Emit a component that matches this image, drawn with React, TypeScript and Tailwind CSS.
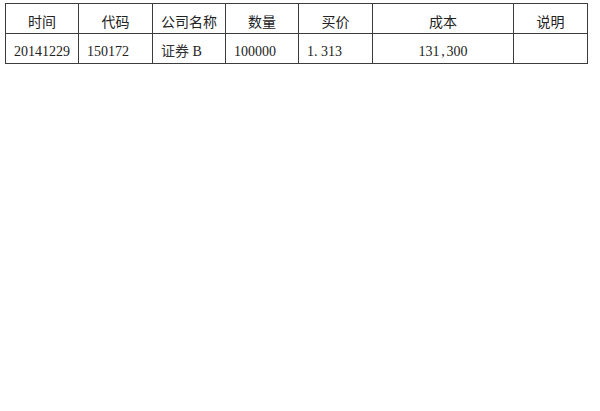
const columns = [
	{ label: '时间', width: 'w-[73px]' },
	{ label: '代码', width: 'w-[74px]' },
	{ label: '公司名称', width: 'w-[73px]' },
	{ label: '数量', width: 'w-[73px]' },
	{ label: '买价', width: 'w-[74px]' },
	{ label: '成本', width: 'w-[141px]' },
	{ label: '说明', width: 'w-[74px]' },
];

// SimSun-style half-width punctuation: give dots and commas a full digit cell
const Punct = ({ ch }: { ch: string }) => <span className="inline-block w-[7px]">{ch}</span>;

const App: React.FC = () => {
	const cell = 'border border-[#3c3c3c] h-[30px] p-0 align-bottom';

	return (
		<div className="w-[600px] h-[411px] bg-white pl-[5px] pt-[3px]">
			<table className="table-fixed border-collapse w-[583px] text-[#222]">
				<thead>
					<tr>
						{columns.map((c) => (
							<th
								key={c.label}
								className={`${cell} ${c.width} text-center text-[14px] font-normal leading-[20px] pb-[2px]`}
								style={{ fontFamily: '"Noto Sans CJK SC", sans-serif' }}
							>
								{c.label}
							</th>
						))}
					</tr>
				</thead>
				<tbody
					className="text-[14px] leading-[20px]"
					style={{ fontFamily: '"Liberation Serif", "Noto Sans CJK SC", serif' }}
				>
					<tr>
						<td className={`${cell} pl-[8px] pb-[1px]`}>20141229</td>
						<td className={`${cell} pl-[8px] pb-[1px]`}>150172</td>
						<td className={`${cell} pl-[8px] pb-[1px]`}>
							<span style={{ fontFamily: '"Noto Sans CJK SC", sans-serif' }} className="text-[#333]">
								证券
							</span>{' '}
							B
						</td>
						<td className={`${cell} pl-[8px] pb-[1px]`}>100000</td>
						<td className={`${cell} pl-[8px] pb-[1px]`}>
							1<Punct ch="." />313
						</td>
						<td className={`${cell} text-center pb-[1px]`}>
							131<Punct ch="," />300
						</td>
						<td className={`${cell} pb-[1px]`}></td>
					</tr>
				</tbody>
			</table>
		</div>
	);
};

export default App;
